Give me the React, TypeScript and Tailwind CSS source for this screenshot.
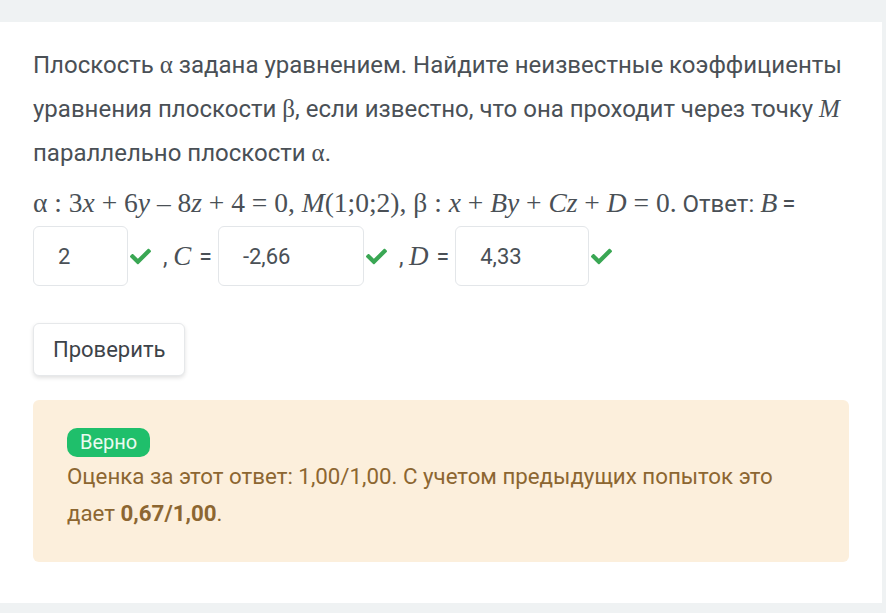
import { FaCheck } from "react-icons/fa";

function Check() {
  return <FaCheck className="w-[21px] h-[21px] text-[#3aa754] ml-[2px] mr-[12px]" />;
}

function AnswerBox({ value, width }: { value: string; width: string }) {
  return (
    <div
      className={`${width} h-[60px] flex items-center pl-[24px] border border-[#e3e6e9] rounded-[6px] bg-white text-[22px]`}
    >
      {value}
    </div>
  );
}

const serif = "font-['Liberation_Serif',serif]";

export default function App() {
  return (
    <div className="min-h-[613px] bg-[#eff2f3] pt-[22px] pb-[10px] pr-[4px] font-['Roboto',sans-serif] text-[#4a5056]">
      <div className="bg-white pl-[33px] pr-[33px] pt-[21px] pb-[41px]">
        <p className="text-[24px] leading-[44px]">
          Плоскость <span className={`${serif} text-[25px] leading-[44px]`}>α</span> задана
          уравнением. Найдите неизвестные коэффициенты уравнения плоскости{" "}
          <span className={`${serif} text-[25px] leading-[44px]`}>β</span>, если известно, что
          она проходит через точку{" "}
          <span className={`${serif} italic text-[25px] leading-[44px]`}>M</span> параллельно
          плоскости <span className={`${serif} text-[25px] leading-[44px]`}>α</span>.
        </p>

        <div className="mt-[6px] text-[24px] leading-[44px] whitespace-nowrap">
          <span className={`${serif} text-[27.5px] leading-[44px]`}>
            α : 3<i>x</i> + 6<i>y</i> – 8<i>z</i> + 4 = 0, <i>M</i>(1;0;2), β : <i>x</i> +{" "}
            <i>B</i>
            <i>y</i> + <i>C</i>
            <i>z</i> + <i>D</i> = 0.
          </span>{" "}
          Ответ: <i className={`${serif} text-[28px] leading-[44px]`}>B</i>
          <span className="ml-[5px]">=</span>
        </div>

        <div className="flex items-center text-[23px] mt-[0px]">
          <AnswerBox value="2" width="w-[95px]" />
          <Check />
          <span className="mr-[6px]">
            , <i className={`${serif} text-[27px]`}>C</i>
            <span className="ml-[8px]">=</span>
          </span>
          <AnswerBox value="-2,66" width="w-[146px]" />
          <Check />
          <span className="mr-[6px]">
            , <i className={`${serif} text-[27px]`}>D</i>
            <span className="ml-[8px]">=</span>
          </span>
          <AnswerBox value="4,33" width="w-[134px]" />
          <Check />
        </div>

        <button className="mt-[37px] h-[53px] px-[19px] bg-white border border-[#e6e8ea] rounded-[6px] shadow-[0_2px_4px_rgba(0,0,0,0.12)] text-[22px] text-[#3d4349]">
          Проверить
        </button>

        <div className="mt-[24px] w-[816px] h-[162px] bg-[#fcefdc] rounded-[6px] pl-[34px] pt-[23px] text-[#8c6631] text-[22.3px] leading-[37px]">
          <div>
            <span className="inline-flex items-center h-[29px] px-[13px] rounded-[10px] bg-[#1fbf6b] text-[#eafaf0] text-[20px] leading-none">
              Верно
            </span>
          </div>
          <p className="mt-[-2px]">
            Оценка за этот ответ: 1,00/1,00. С учетом предыдущих попыток это
            <br />
            дает <b>0,67/1,00</b>.
          </p>
        </div>
      </div>
    </div>
  );
}
